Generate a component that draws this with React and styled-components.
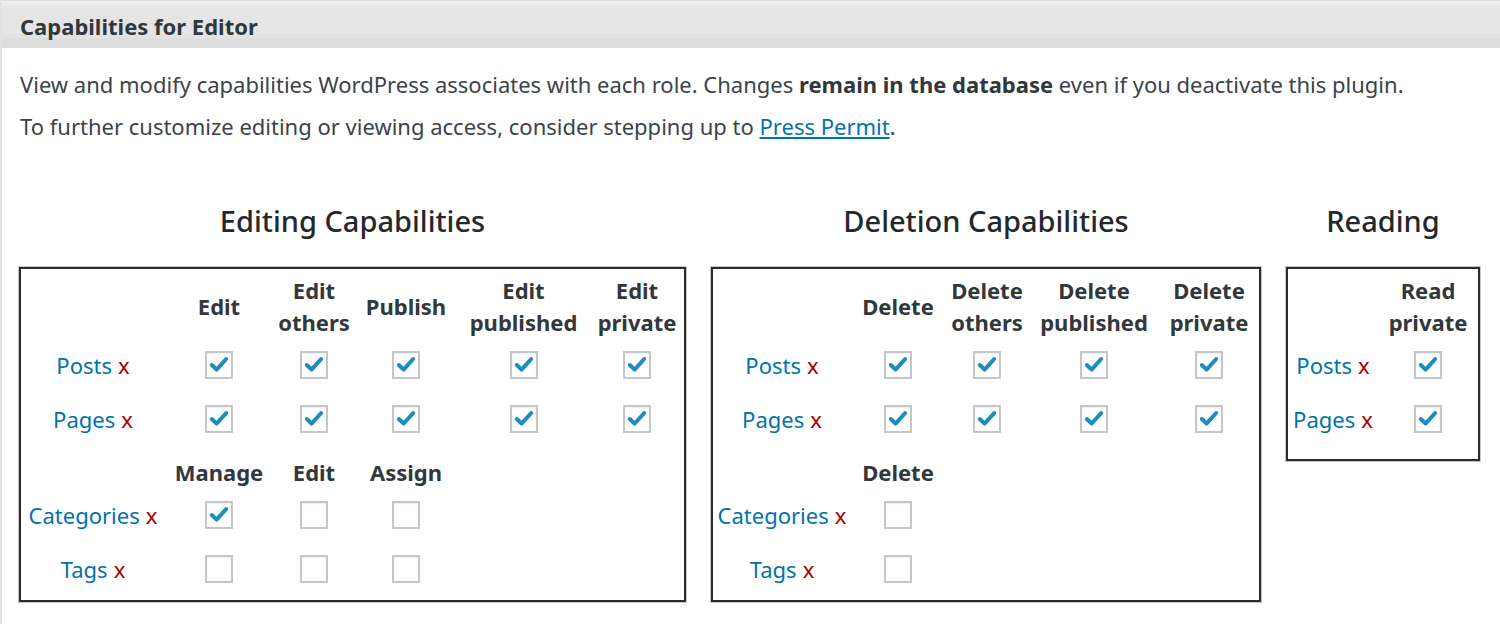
import React from "react";
import styled, { createGlobalStyle } from "styled-components";

const GlobalStyle = createGlobalStyle`
  html, body {
    margin: 0;
    padding: 0;
    background: #fff;
  }
  body {
    font-family: "Noto Sans", "Open Sans", sans-serif;
    color: #3c434a;
  }
`;

const Page = styled.div`
  width: 1500px;
  height: 624px;
  overflow: hidden;
  border-left: 2px solid #e2e2e2;
  box-sizing: border-box;
`;

const TitleBar = styled.div`
  height: 48px;
  box-sizing: border-box;
  border-top: 1px solid #dcdcdc;
  background: linear-gradient(
    to bottom,
    #f1f1f1 0px,
    #e9e9e9 5px,
    #e5e5e5 7px,
    #e5e5e5 34px,
    #dcdcdc 35px,
    #e9e9e9 36px,
    #dedede 37px,
    #dedede 48px
  );
  display: flex;
  align-items: center;
  padding: 2px 0 0 18px;
`;

const Title = styled.h2`
  margin: 0;
  font-size: 22px;
  font-weight: 700;
  color: #32373c;
`;

const Intro = styled.div`
  padding: 15px 0 0 18px;
`;

const Para = styled.p`
  margin: 0;
  font-size: 22px;
  line-height: 42px;
  color: #3c434a;

  b {
    font-weight: 700;
    color: #32373c;
  }
  a {
    color: #0073aa;
    text-decoration: underline;
  }
`;

const Groups = styled.div`
  display: flex;
  align-items: flex-start;
  gap: 25px;
  padding: 54px 0 0 17px;
`;

const Group = styled.section`
  display: flex;
  flex-direction: column;
  align-items: stretch;
`;

const GroupTitle = styled.h3`
  margin: 0 0 26px;
  text-align: center;
  font-size: 29px;
  line-height: 40px;
  font-weight: 500;
  color: #23282d;
`;

const Box = styled.div`
  border: 2px solid #2b2b2b;
  box-shadow: 0 0 0 1px #c8c8c8;
  padding-bottom: ${(p) => p.$pad}px;
  background: #fff;
`;

const Table = styled.table`
  border-collapse: collapse;
  table-layout: fixed;
`;

const HeadCell = styled.th`
  height: ${(p) => p.$h}px;
  padding: ${(p) => p.$pt}px 0 0;
  box-sizing: border-box;
  vertical-align: middle;
  text-align: center;
  font-size: 22px;
  line-height: 32px;
  font-weight: 700;
  color: #32373c;
`;

const LabelCell = styled.td`
  height: 54px;
  padding: 0;
  text-align: center;
  vertical-align: middle;
  font-size: 22px;
  white-space: nowrap;
`;

const TypeLink = styled.a`
  color: #0073aa;
  text-decoration: none;
`;

const Remove = styled.span`
  color: #a00;
  margin-left: 6px;
`;

const BoxCell = styled.td`
  height: 54px;
  padding: 0;
  text-align: center;
  vertical-align: middle;
`;

const Check = styled.span`
  display: inline-flex;
  align-items: center;
  justify-content: center;
  width: 28px;
  height: 28px;
  box-sizing: border-box;
  border: 2px solid #c3c7cb;
  background: #fff;
  box-shadow: inset 0 1px 2px rgba(0, 0, 0, 0.07);
  vertical-align: middle;
`;

const CheckBox = ({ on }) => (
  <Check>
    {on && (
      <svg width="22" height="22" viewBox="0 0 22 22">
        <path
          d="M3.8 11 L8.6 15.6 L18.2 5"
          fill="none"
          stroke="#1e8cbe"
          strokeWidth="4"
          strokeLinecap="round"
          strokeLinejoin="round"
        />
      </svg>
    )}
  </Check>
);

const Label = ({ children }) => (
  <LabelCell>
    <TypeLink href="#">{children}</TypeLink>
    <Remove>x</Remove>
  </LabelCell>
);

const CapTable = ({ widths, sections }) => (
  <Table>
    <colgroup>
      {widths.map((w, i) => (
        <col key={i} style={{ width: w }} />
      ))}
    </colgroup>
    <tbody>
      {sections.map((sec, si) => {
        const h = si === 0 ? 69 : 42;
        const pt = si === 0 ? 5 : 10;
        return (
          <React.Fragment key={si}>
            <tr>
              <HeadCell $h={h} $pt={pt} />
              {widths.slice(1).map((_, ci) => (
                <HeadCell key={ci} $h={h} $pt={pt}>
                  {(sec.heads[ci] || []).map((line, li) => (
                    <div key={li}>{line}</div>
                  ))}
                </HeadCell>
              ))}
            </tr>
            {sec.rows.map((row) => (
              <tr key={row.name}>
                <Label>{row.name}</Label>
                {widths.slice(1).map((_, ci) => (
                  <BoxCell key={ci}>
                    {ci < row.vals.length && <CheckBox on={row.vals[ci]} />}
                  </BoxCell>
                ))}
              </tr>
            ))}
          </React.Fragment>
        );
      })}
    </tbody>
  </Table>
);

const editing = [
  {
    heads: [["Edit"], ["Edit", "others"], ["Publish"], ["Edit", "published"], ["Edit", "private"]],
    rows: [
      { name: "Posts", vals: [true, true, true, true, true] },
      { name: "Pages", vals: [true, true, true, true, true] },
    ],
  },
  {
    heads: [["Manage"], ["Edit"], ["Assign"]],
    rows: [
      { name: "Categories", vals: [true, false, false] },
      { name: "Tags", vals: [false, false, false] },
    ],
  },
];

const deletion = [
  {
    heads: [["Delete"], ["Delete", "others"], ["Delete", "published"], ["Delete", "private"]],
    rows: [
      { name: "Posts", vals: [true, true, true, true] },
      { name: "Pages", vals: [true, true, true, true] },
    ],
  },
  {
    heads: [["Delete"]],
    rows: [
      { name: "Categories", vals: [false] },
      { name: "Tags", vals: [false] },
    ],
  },
];

const reading = [
  {
    heads: [["Read", "private"]],
    rows: [
      { name: "Posts", vals: [true] },
      { name: "Pages", vals: [true] },
    ],
  },
];

export default function App() {
  return (
    <Page>
      <GlobalStyle />
      <TitleBar>
        <Title>Capabilities for Editor</Title>
      </TitleBar>
      <Intro>
        <Para>
          View and modify capabilities WordPress associates with each role. Changes{" "}
          <b>remain in the database</b> even if you deactivate this plugin.
        </Para>
        <Para>
          To further customize editing or viewing access, consider stepping up to{" "}
          <a href="#">Press Permit</a>.
        </Para>
      </Intro>
      <Groups>
        <Group>
          <GroupTitle>Editing Capabilities</GroupTitle>
          <Box $pad={4}>
            <CapTable widths={[144, 108, 82, 102, 133, 94]} sections={editing} />
          </Box>
        </Group>
        <Group>
          <GroupTitle>Deletion Capabilities</GroupTitle>
          <Box $pad={4}>
            <CapTable widths={[138, 94, 84, 130, 100]} sections={deletion} />
          </Box>
        </Group>
        <Group>
          <GroupTitle>Reading</GroupTitle>
          <Box $pad={13}>
            <CapTable widths={[90, 100]} sections={reading} />
          </Box>
        </Group>
      </Groups>
    </Page>
  );
}
